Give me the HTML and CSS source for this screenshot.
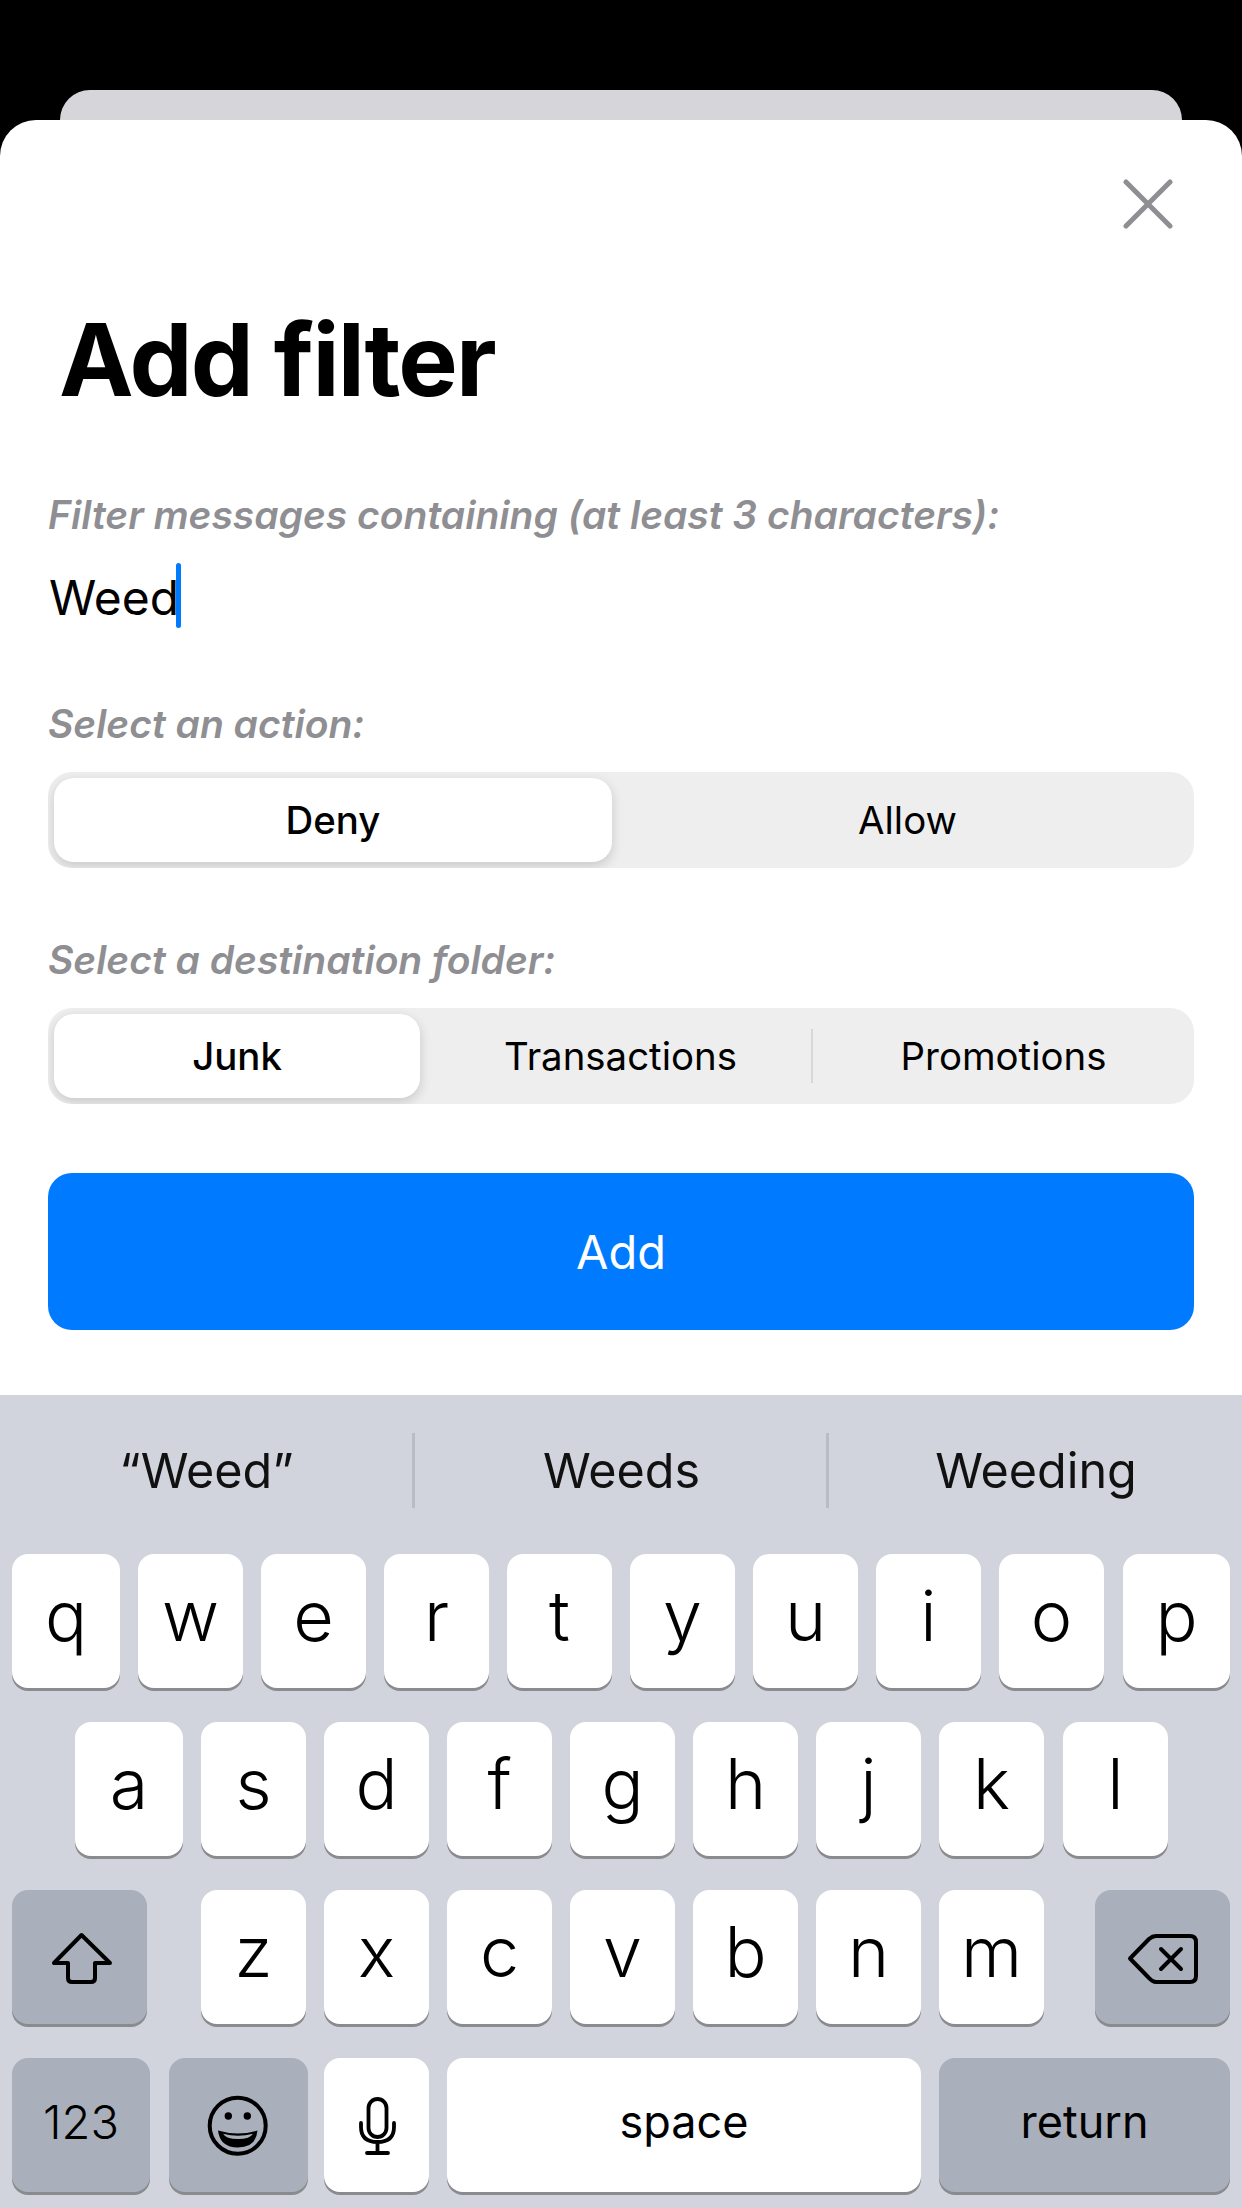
FILE: index.html
```html
<!DOCTYPE html>
<html lang="en">
<head>
<meta charset="utf-8">
<title>Add filter</title>
<link rel="stylesheet" href="styles.css">
</head>
<body>
<div class="back-sheet"></div>
<main class="sheet">
  <div class="close-row">
    <svg class="close-icon" viewBox="0 0 50 50"><path d="M3 3 47 47M47 3 3 47"/></svg>
  </div>
  <h1 class="title">Add filter</h1>
  <p class="label label-first">Filter messages containing (at least 3 characters):</p>
  <div class="field"><span class="field-text">Weed</span><span class="caret"></span></div>
  <p class="label label-action">Select an action:</p>
  <div class="segments">
    <div class="segment selected two">Deny</div>
    <div class="segment">Allow</div>
  </div>
  <p class="label label-folder">Select a destination folder:</p>
  <div class="segments">
    <div class="segment selected three">Junk</div>
    <div class="segment">Transactions</div>
    <div class="divider"></div>
    <div class="segment">Promotions</div>
  </div>
  <button class="add-button">Add</button>
</main>
<section class="keyboard">
  <div class="suggestions">
    <div class="suggestion s-first">“Weed”</div>
    <div class="sep"></div>
    <div class="suggestion s-mid">Weeds</div>
    <div class="sep"></div>
    <div class="suggestion s-last">Weeding</div>
  </div>
  <div class="rows">
    <div class="row row-first">
      <div class="key edge">q</div><div class="key">w</div><div class="key">e</div><div class="key">r</div><div class="key">t</div><div class="key">y</div><div class="key">u</div><div class="key">i</div><div class="key">o</div><div class="key last edge-end">p</div>
    </div>
    <div class="row row-second">
      <div class="key edge">a</div><div class="key">s</div><div class="key">d</div><div class="key">f</div><div class="key">g</div><div class="key">h</div><div class="key">j</div><div class="key">k</div><div class="key last">l</div>
    </div>
    <div class="row row-first">
      <div class="key fn wide">
        <svg class="key-icon" viewBox="0 0 135 134"><path class="line" d="M69.500 45 42 73H56V88Q56 92 60 92H79Q83 92 83 88V73H98Z"/></svg>
      </div>
      <div class="letters">
        <div class="key">z</div><div class="key">x</div><div class="key">c</div><div class="key">v</div><div class="key">b</div><div class="key">n</div><div class="key">m</div>
      </div>
      <div class="key fn wide delete">
        <svg class="key-icon" viewBox="0 0 135 134"><path class="line" d="M35 68.500 54 49Q57.500 46 61 46H95Q101 46 101 52V86Q101 92 95 92H61Q57.500 92 54 88ZM66 59 86 79M86 59 66 79"/></svg>
      </div>
    </div>
    <div class="row row-first">
      <div class="key fn small numbers">123</div>
      <div class="key fn emoji">
        <svg class="key-icon" viewBox="0 0 139 134">
          <circle class="line" cx="68.700" cy="67.700" r="28"/>
          <circle cx="59.300" cy="58" r="3.700"/><circle cx="78.300" cy="58" r="3.700"/>
          <path d="M49 72.500Q68.800 78.500 88.500 72.500Q87 89.500 68.800 89.500Q51 89.500 49 72.500Z"/>
          <path class="teeth" d="M54 75.800Q69 79.500 84 75.800Q81 81 69 81Q57 81 54 75.800Z"/>
        </svg>
      </div>
      <div class="key">
        <svg class="key-icon" viewBox="0 0 105 134">
          <rect class="line thin" x="44.500" y="41" width="18" height="38" rx="9"/>
          <path class="line thin" d="M37 65V69Q37 84 53.500 84Q70 84 70 69V65M53.500 84V94M43 95H64"/>
        </svg>
      </div>
      <div class="key small space">space</div>
      <div class="key fn small return">return</div>
    </div>
  </div>
</section>
</body>
</html>
```
FILE: styles.css
```css
* { box-sizing: border-box; }
html, body { margin: 0; padding: 0; }
body {
  width: 1242px;
  height: 2208px;
  overflow: hidden;
  background: #000;
  padding-top: 90px;
  font-family: Inter, "Liberation Sans", sans-serif;
}
.back-sheet {
  height: 30px;
  margin: 0 60px;
  background: #d6d6da;
  border-radius: 30px 30px 0 0;
}
.sheet {
  height: 1275px;
  background: #fff;
  border-radius: 36px 36px 0 0;
  padding: 0 48px;
  display: flex;
  flex-direction: column;
}
.close-row {
  display: flex;
  justify-content: flex-end;
  padding: 59px 21px 0 0;
}
.close-icon { width: 50px; height: 50px; display: block; }
.close-icon path { stroke: #8e8e93; stroke-width: 5; stroke-linecap: round; fill: none; }
.title {
  margin: 71px 0 0 11px;
  font-size: 100px;
  line-height: 120px;
  font-weight: 700;
  letter-spacing: -1.850px;
  color: #000;
}
.label {
  margin: 0;
  font-size: 39px;
  line-height: 44px;
  font-weight: 600;
  font-style: italic;
  color: #8e8e93;
}
.label-first { margin-top: 73px; }
.label-action { margin-top: 71px; }
.label-folder { margin-top: 70px; }
.field {
  display: flex;
  align-items: center;
  height: 66px;
  margin-top: 28px;
  padding-left: 1px;
}
.field-text { font-size: 48px; line-height: 66px; color: #000; }
.caret { width: 5px; height: 65px; margin: 0 0 6px -3px; border-radius: 3px; background: #007aff; }
.segments {
  display: flex;
  align-items: center;
  height: 96px;
  margin-top: 26px;
  padding: 6px 0 6px 6px;
  border-radius: 24px;
  background: #eeeeef;
  overflow: hidden;
}
.segment {
  flex: 1;
  height: 84px;
  display: flex;
  align-items: center;
  justify-content: center;
  font-size: 38.400px;
  color: #000;
}
.segment.selected {
  font-weight: 500;
  background: #fff;
  border-radius: 20px;
  box-shadow: 0 4px 12px rgba(0, 0, 0, 0.16);
}
.segment.selected.two { flex: 0 0 558px; margin-right: 9px; }
.segment.selected.three { flex: 0 0 366px; margin-right: 10px; }
.divider { width: 2px; height: 54px; background: #d8d8da; }
.add-button {
  display: block;
  width: 100%;
  height: 157px;
  margin-top: 69px;
  border: 0;
  border-radius: 24px;
  background: #007aff;
  color: #fff;
  font: 400 47px Inter, "Liberation Sans", sans-serif;
}
.keyboard {
  height: 813px;
  background: #d1d4dc;
}
.suggestions {
  height: 159px;
  display: flex;
  align-items: center;
  padding-bottom: 8px;
}
.suggestion {
  text-align: center;
  font-size: 48.500px;
  font-weight: 370;
  color: #111;
}
.s-first { flex: 0 0 412px; padding-left: 1px; }
.s-mid { flex: 0 0 411px; padding-left: 2px; }
.s-last { flex: 1; padding-left: 1px; }
.sep { width: 3px; height: 75px; background: #b9bcc4; }
.rows { display: flex; flex-direction: column; gap: 34px; }
.row { display: flex; gap: 18px; height: 134px; }
.row-first { padding-left: 12px; }
.row-second { padding-left: 75px; }
.letters { display: flex; gap: 18px; margin-left: 36px; }
.key {
  flex: 0 0 105px;
  height: 134px;
  border-radius: 16px;
  background: #fff;
  box-shadow: 0 3px 0 #8a8b8f;
  display: flex;
  align-items: center;
  justify-content: center;
  font-size: 70px;
  font-weight: 330;
  color: #000;
  padding-bottom: 12px;
}
.key.edge { flex-basis: 108px; }
.key.last { margin-left: 1px; }
.key.edge-end { flex-basis: 107px; }
.key.fn { background: #a9afbb; }
.key.wide { flex-basis: 135px; }
.key.delete { margin-left: 33px; }
.key.small { font-size: 45px; font-weight: 400; padding-bottom: 8px; }
.key.numbers { flex-basis: 138px; font-size: 47px; font-weight: 350; }
.key.emoji { flex-basis: 139px; margin-left: 1px; margin-right: -2px; }
.key.space { flex-basis: 474px; }
.key.return { flex-basis: 291px; }
.key-icon { width: 100%; height: 134px; display: block; }
.key:has(> .key-icon) { padding: 0; }
.line { fill: none; stroke: #000; stroke-width: 4; stroke-linejoin: round; stroke-linecap: round; }
.line.thin { stroke-width: 3.800; }
.teeth { fill: #a9afbb; }
```
